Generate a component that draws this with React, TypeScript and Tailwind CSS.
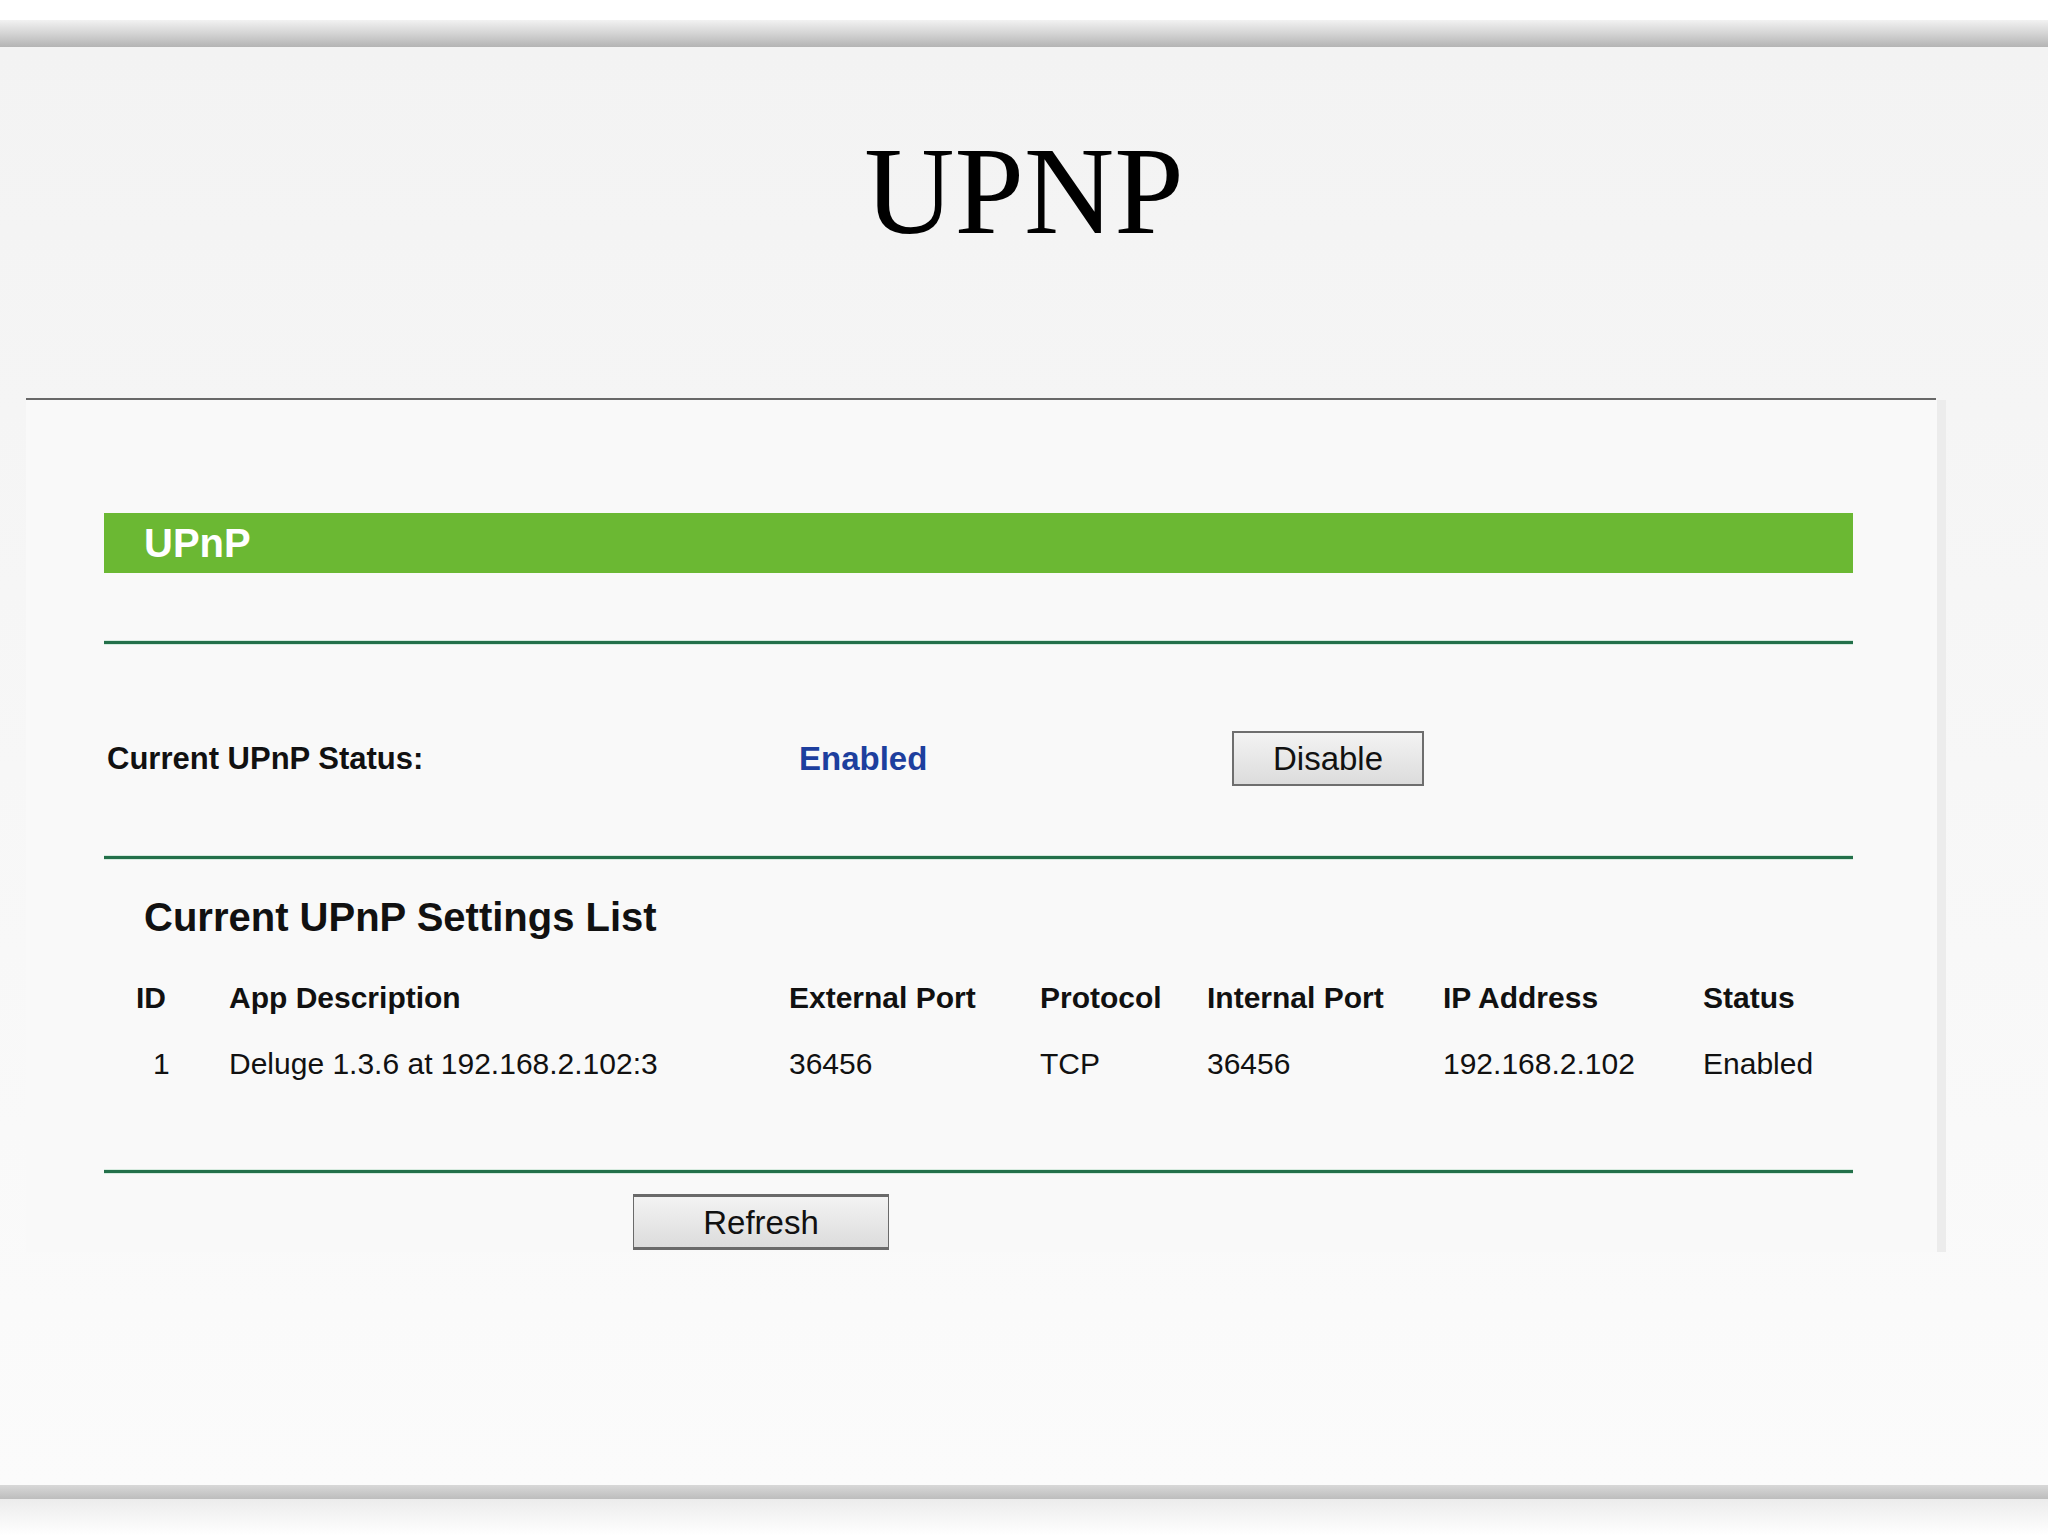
const COLS = 'grid grid-cols-[93px_560px_251px_167px_236px_260px_auto] items-center'

const headers = ['ID', 'App Description', 'External Port', 'Protocol', 'Internal Port', 'IP Address', 'Status']

const rows = [
  ['1', 'Deluge 1.3.6 at 192.168.2.102:3', '36456', 'TCP', '36456', '192.168.2.102', 'Enabled'],
]

function GreenRule() {
  return (
    <div className="flex flex-col">
      <div className="h-px bg-[#d6ebdf]" />
      <div className="h-[3px] bg-[#23704a]" />
      <div className="h-px bg-[#d6ebdf]" />
    </div>
  )
}

export default function App() {
  return (
    <div className="flex h-[1536px] w-[2048px] flex-col overflow-hidden bg-white font-['Liberation_Sans',Arial,sans-serif] text-[#111]">
      <div className="h-[20px] bg-white" />
      <div className="h-[27px] bg-linear-to-b from-[#f2f2f2] via-[#d4d4d4] to-[#b4b4b4]" />

      <main className="flex flex-1 flex-col bg-linear-to-b from-[#f3f3f3] to-[#fbfbfb]">
        <h1 className="pt-[82px] text-center font-['Liberation_Serif','Times_New_Roman',serif] text-[125px] leading-none text-black">
          UPNP
        </h1>

        <section className="ml-[26px] mt-[144px] flex w-[1920px] flex-col">
          <div className="h-[2px] w-[1910px] bg-[#686868]" />
          <div className="flex h-[852px]">
            <div className="flex w-[1911px] flex-col bg-[#f9f9f9] pl-[78px] pt-[113px]">
              <div className="flex w-[1749px] flex-col">
                <div className="flex h-[60px] items-center bg-[#6bb833] pl-[40px] text-[40px] font-bold text-white">
                  UPnP
                </div>

                <div className="mt-[67px]">
                  <GreenRule />
                </div>

                <div className="mt-[86px] flex h-[55px] items-center">
                  <span className="w-[695px] pl-[3px] text-[31px] font-bold leading-none">Current UPnP Status:</span>
                  <span className="w-[433px] text-[33px] font-bold leading-none text-[#1d3f9e]">Enabled</span>
                  <button
                    type="button"
                    className="h-[55px] w-[192px] border-2 border-[#6e6e6e] bg-linear-to-b from-[#f3f3f3] to-[#dcdcdc] text-[33px] leading-none text-[#111]"
                  >
                    Disable
                  </button>
                </div>

                <div className="mt-[69px]">
                  <GreenRule />
                </div>

                <h2 className="mt-[37px] pl-[40px] text-[40px] font-bold leading-none">Current UPnP Settings List</h2>

                <div className="ml-[32px] mt-[46px] flex flex-col gap-[36px] text-[30px] leading-none">
                  <div className={`${COLS} font-bold`}>
                    {headers.map((h) => (
                      <span key={h}>{h}</span>
                    ))}
                  </div>
                  {rows.map((r) => (
                    <div key={r[0]} className={COLS}>
                      {r.map((c, i) => (
                        <span key={i} className={i === 0 ? 'pl-[17px]' : ''}>
                          {c}
                        </span>
                      ))}
                    </div>
                  ))}
                </div>

                <div className="mt-[90px]">
                  <GreenRule />
                </div>

                <div className="mt-[20px] pl-[529px]">
                  <button
                    type="button"
                    className="h-[56px] w-[256px] border-x border-y-[3px] border-[#6a6a6a] bg-linear-to-b from-[#f3f3f3] to-[#dcdcdc] text-[33px] leading-none text-[#111]"
                  >
                    Refresh
                  </button>
                </div>
              </div>
            </div>
            <div className="w-[9px] bg-[#ececec]" />
          </div>
        </section>
      </main>

      <div className="h-[14px] bg-linear-to-b from-[#d8d8d8] to-[#bdbdbd]" />
      <div className="h-[37px] bg-linear-to-b from-[#ececec] to-white" />
    </div>
  )
}
